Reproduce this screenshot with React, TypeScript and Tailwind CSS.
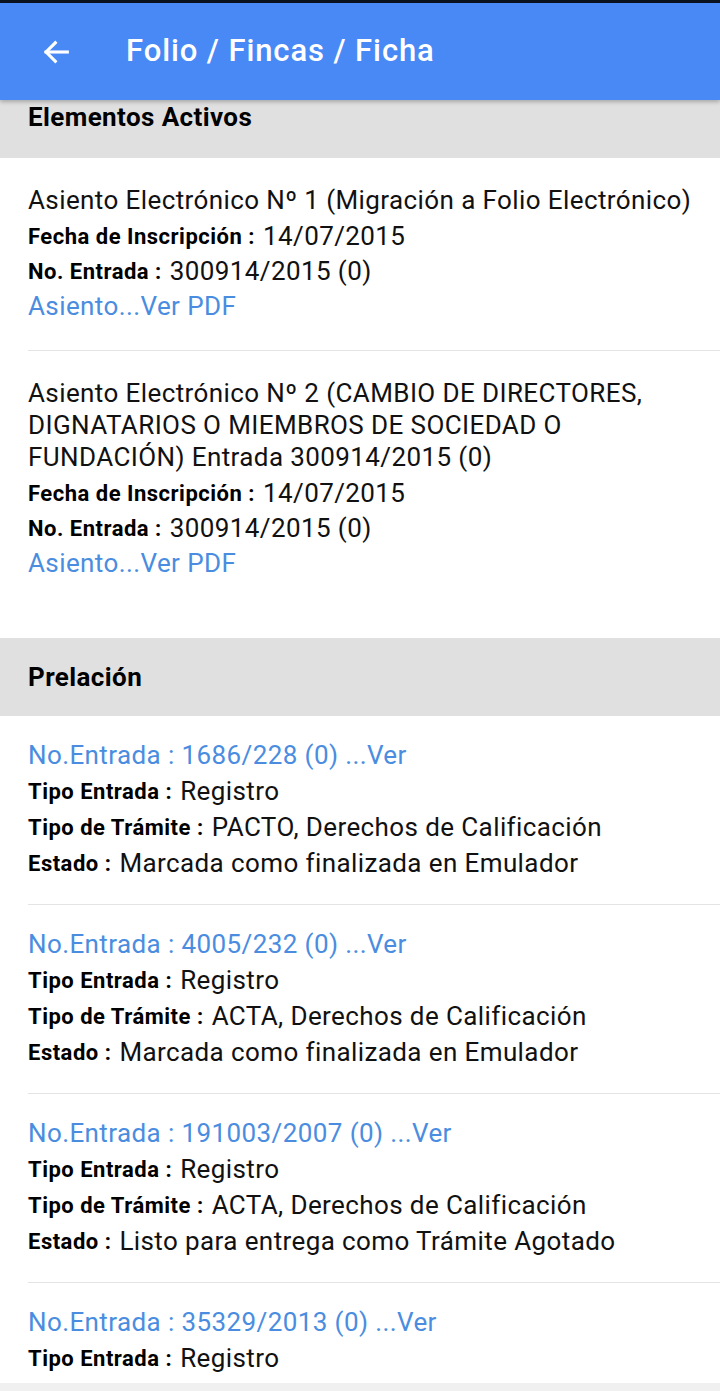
import React from "react";

const font = { fontFamily: "Roboto, 'Noto Sans', sans-serif" };

function Row({ label, value }: { label: string; value: string }) {
  return (
    <div className="h-[35px] flex items-center whitespace-nowrap">
      <span className="font-bold text-[22px] tracking-[0.5px] text-black">{label} :</span>
      <span className="text-[26px] tracking-[0.4px] text-[#111] ml-[8px]">{value}</span>
    </div>
  );
}

function Asiento({ title, last }: { title: string; last?: boolean }) {
  return (
    <div className={`pt-[26px] pb-[26px] ${last ? "" : "border-b border-[#e4e4e4]"}`}>
      <div className="text-[26px] tracking-[0.4px] leading-[32px] text-[#111] pr-[20px]">{title}</div>
      <div className="mt-[3px]">
        <Row label="Fecha de Inscripción" value="14/07/2015" />
        <Row label="No. Entrada" value="300914/2015 (0)" />
        <div className="h-[35px] flex items-center text-[26px] tracking-[0.4px] text-[#4a8de0]">Asiento...Ver PDF</div>
      </div>
    </div>
  );
}

function Field({ label, value }: { label: string; value: string }) {
  return (
    <div className="h-[36px] flex items-center whitespace-nowrap">
      <span className="font-bold text-[22px] tracking-[0.5px] text-black">{label} :</span>
      <span className="text-[26px] tracking-[0.4px] text-[#111] ml-[8px]">{value}</span>
    </div>
  );
}

function Prel({ no, tipo, tramite, estado, last }: { no: string; tipo: string; tramite?: string; estado?: string; last?: boolean }) {
  return (
    <div className={`pt-[21px] pb-[23px] ${last ? "" : "border-b border-[#e4e4e4]"}`}>
      <div className="h-[36px] flex items-center text-[26px] tracking-[0.4px] text-[#4a8de0]">No.Entrada : {no} ...Ver</div>
      <Field label="Tipo Entrada" value={tipo} />
      {tramite && <Field label="Tipo de Trámite" value={tramite} />}
      {estado && <Field label="Estado" value={estado} />}
    </div>
  );
}

export default function App() {
  return (
    <div style={font} className="w-[720px] h-[1391px] bg-white overflow-hidden flex flex-col relative">
      <div className="h-[3px] bg-[#0b1220] shrink-0" />
      <div className="h-[97px] bg-[#4889f5] flex items-center shrink-0 relative z-10 shadow-[0_2px_4px_rgba(0,0,0,0.25)]">
        <svg width="34" height="34" viewBox="0 0 24 24" className="ml-[39px]" fill="none" stroke="white" strokeWidth="2.2" strokeLinecap="square">
          <path d="M20 12H5" />
          <path d="M11.5 5.5L5 12l6.5 6.5" />
        </svg>
        <span className="text-white text-[31px] tracking-[0.9px] font-medium ml-[53px]">Folio / Fincas / Ficha</span>
      </div>
      <div className="h-[58px] bg-[#e0e0e0] shrink-0 px-[28px] pt-[2px]">
        <div className="font-bold text-[26px] leading-[30px] tracking-[0.4px] text-black">Elementos Activos</div>
      </div>
      <div className="pl-[28px]">
        <Asiento title="Asiento Electrónico Nº 1 (Migración a Folio Electrónico)" />
        <Asiento title="Asiento Electrónico Nº 2 (CAMBIO DE DIRECTORES, DIGNATARIOS O MIEMBROS DE SOCIEDAD O FUNDACIÓN) Entrada 300914/2015 (0)" last />
      </div>
      <div className="h-[78px] bg-[#e0e0e0] shrink-0 px-[28px] flex items-center mt-[31px]">
        <span className="font-bold text-[26px] tracking-[0.4px] text-black">Prelación</span>
      </div>
      <div className="pl-[28px]">
        <Prel no="1686/228 (0)" tipo="Registro" tramite="PACTO, Derechos de Calificación" estado="Marcada como finalizada en Emulador" />
        <Prel no="4005/232 (0)" tipo="Registro" tramite="ACTA, Derechos de Calificación" estado="Marcada como finalizada en Emulador" />
        <Prel no="191003/2007 (0)" tipo="Registro" tramite="ACTA, Derechos de Calificación" estado="Listo para entrega como Trámite Agotado" />
        <Prel no="35329/2013 (0)" tipo="Registro" last />
      </div>
      <div className="absolute left-0 right-0 bottom-0 h-[8px] bg-[#f0f0f0]" />
    </div>
  );
}
